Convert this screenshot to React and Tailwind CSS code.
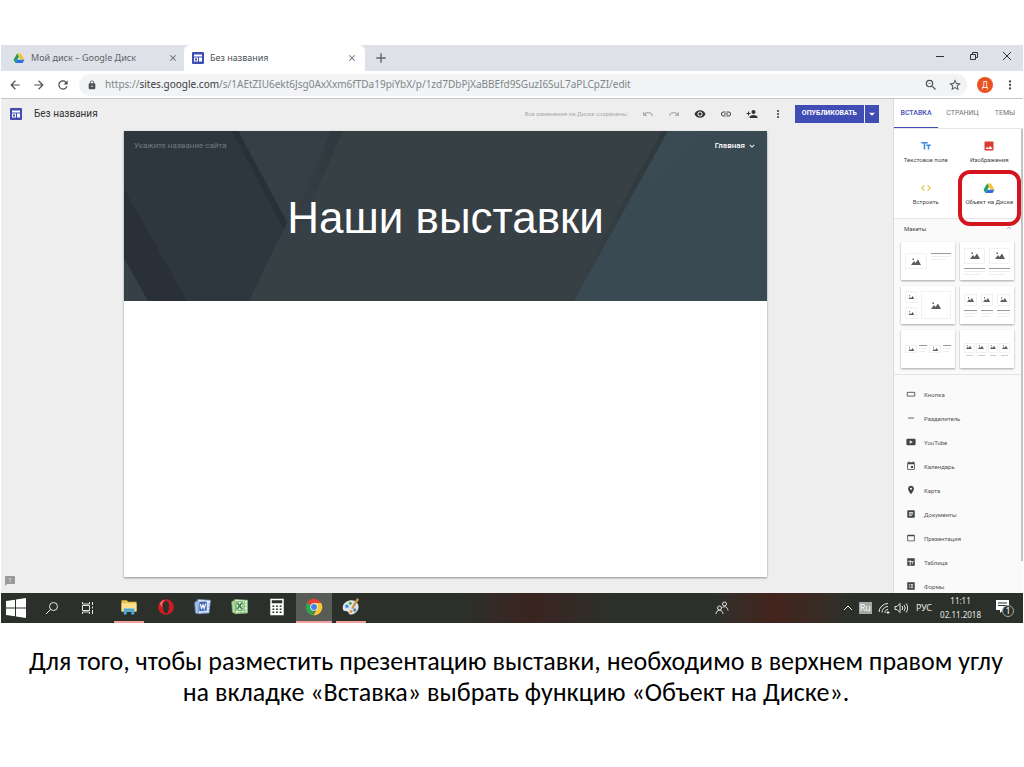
import React from "react";
import {
  MdArrowBack, MdArrowForward, MdRefresh, MdLock, MdStarBorder, MdMoreVert, MdUndo, MdRedo,
  MdVisibility, MdLink, MdPersonAdd, MdArrowDropDown, MdTextFields, MdImage, MdCode,
  MdRemove, MdEvent, MdPlace, MdArticle, MdWebAsset, MdFeedback, MdExpandMore,
  MdExpandLess, MdClose, MdAdd, MdZoomOut,
} from "react-icons/md";

const DriveLogo = ({ className }) => (
  <svg viewBox="0 0 24 22" className={className} aria-hidden="true">
    <path d="M8 1h8l8 14h-8z" fill="#fbc02d" />
    <path d="M8 1l4 7-8 14-4-7z" fill="#1e9e5a" />
    <path d="M8 15h16l-4 7H4z" fill="#2f6fe0" />
  </svg>
);

const SitesLogo = ({ className }) => (
  <svg viewBox="0 0 12 12" className={className} aria-hidden="true">
    <rect width="12" height="12" rx="1" fill="#3f4db3" />
    <path d="M2 2.500h8v2H2zM2 5.500h4v4H2zM7 5.500h3v4H7z" fill="#fff" />
    <path d="M3 6.500h2v2H3z" fill="#3f4db3" />
  </svg>
);

const ButtonIcon = ({ className }) => (
  <svg viewBox="0 0 24 24" fill="none" stroke="currentColor" strokeWidth="2" className={className} aria-hidden="true">
    <path d="M3 8h18v9H3z" />
  </svg>
);

const YouTubeIcon = ({ className }) => (
  <svg viewBox="0 0 24 24" fill="currentColor" className={className} aria-hidden="true">
    <path fillRule="evenodd" d="M3 4h18l2 2v12l-2 2H3l-2-2V6zM9 8v8l7-4z" />
  </svg>
);

const TableIcon = ({ className }) => (
  <svg viewBox="0 0 24 24" fill="currentColor" className={className} aria-hidden="true">
    <path fillRule="evenodd" d="M3 3h18v18H3zM9 7v3H5v2h4v7h2v-7h3v5h2v-5h3v-2h-8V7z" />
  </svg>
);

const FormsIcon = ({ className }) => (
  <svg viewBox="0 0 24 24" fill="currentColor" className={className} aria-hidden="true">
    <path fillRule="evenodd" d="M3 3h18v18H3zM7 7v2h2V7zM11 7v2h6V7zM7 11v2h2v-2zM11 11v2h6v-2zM7 15v2h2v-2zM11 15v2h6v-2z" />
  </svg>
);

function Browser() {
  return (
    <header className="font-['Noto_Sans','Open_Sans',sans-serif]">
      <div className="flex h-[26px] items-stretch bg-[#dee1e8] text-[#5f6368]">
        <div className="flex w-[183px] items-center pr-1 pl-3">
          <DriveLogo className="mr-1.5 h-2.5 w-3" />
          <span className="flex-1 text-[9px] whitespace-nowrap">Мой диск – Google Диск</span>
          <button aria-label="Закрыть вкладку" className="p-0.5"><MdClose className="size-2.5" /></button>
        </div>
        <div className="flex w-[181px] items-center rounded-t-md bg-white pr-1.5 pl-2">
          <SitesLogo className="mr-1.5 size-3" />
          <span className="flex-1 text-[9px] whitespace-nowrap text-[#4a4d52]">Без названия</span>
          <button aria-label="Закрыть вкладку" className="p-0.5"><MdClose className="size-2.5" /></button>
        </div>
        <button aria-label="Новая вкладка" className="px-2"><MdAdd className="size-4" /></button>
        <div className="ml-auto flex pb-1 text-[#333]">
          <button aria-label="Свернуть" className="flex w-[34px] items-center justify-center">
            <svg viewBox="0 0 10 10" className="size-2.5" stroke="currentColor"><path d="M1 5.500h8" /></svg>
          </button>
          <button aria-label="Развернуть" className="flex w-[34px] items-center justify-center">
            <svg viewBox="0 0 10 10" className="size-2.5" fill="none" stroke="currentColor"><path d="M1.500 3.500h5v5h-5zM3.500 3.500v-2h5v5h-2" /></svg>
          </button>
          <button aria-label="Закрыть" className="flex w-8 items-center justify-center">
            <svg viewBox="0 0 10 10" className="size-2.5" stroke="currentColor"><path d="M1 1l8 8M9 1l-8 8" /></svg>
          </button>
        </div>
      </div>
      <div className="flex h-7 items-center border-b border-[#c4c6c9] bg-white pr-1.5 pl-0.5 text-[#4d5156]">
        <button aria-label="Назад" className="flex w-6 justify-center"><MdArrowBack className="size-3.5" /></button>
        <button aria-label="Вперёд" className="flex w-6 justify-center"><MdArrowForward className="size-3.5" /></button>
        <button aria-label="Обновить" className="flex w-6 justify-center"><MdRefresh className="size-3.5" /></button>
        <div className="ml-1 flex h-[22px] flex-1 items-center rounded-full bg-[#f1f3f4] pl-2">
          <MdLock className="mr-2 size-2.5" />
          <div role="textbox" aria-label="Адрес" className="flex-1 text-[10px] whitespace-nowrap text-[#80868b]">
            https://<span className="text-[#3c4043]">sites.google.com</span>/s/1AEtZIU6ekt6Jsg0AxXxm6fTDa19piYbX/p/1zd7DbPjXaBBEfd9SGuzI6SuL7aPLCpZI/edit
          </div>
          <button aria-label="Масштаб" className="flex w-6 justify-center"><MdZoomOut className="size-3.5" /></button>
          <button aria-label="В закладки" className="flex w-6 justify-center"><MdStarBorder className="size-3.5" /></button>
        </div>
        <button className="mx-2.5 size-4 rounded-full bg-[#ea5320] text-[8px] leading-4 text-white">Д</button>
        <button aria-label="Меню"><MdMoreVert className="size-3.5" /></button>
      </div>
    </header>
  );
}

const toolbarActions = [
  ["Отменить", MdUndo, "text-[#b0b0b0]"],
  ["Повторить", MdRedo, "text-[#b0b0b0]"],
  ["Просмотр", MdVisibility, "text-[#333]"],
  ["Ссылка", MdLink, "text-[#444]"],
  ["Добавить редакторов", MdPersonAdd, "text-[#333]"],
  ["Ещё", MdMoreVert, "text-[#444]"],
];

function Toolbar() {
  return (
    <div className="flex h-8 items-center pr-3.5 pb-[3px] pl-[9px]">
      <SitesLogo className="mr-3 size-3" />
      <h1 className="text-[10px] text-[#333]">Без названия</h1>
      <span className="ml-auto text-[6px] whitespace-nowrap text-[#aaa]">Все изменения на Диске сохранены</span>
      <div className="ml-2 flex">
        {toolbarActions.map(([label, Icon, tone]) => (
          <button key={label} aria-label={label} className={`flex w-[26px] justify-center ${tone}`}>
            <Icon className="size-3" />
          </button>
        ))}
      </div>
      <div className="ml-1 flex h-[18px] gap-px text-white">
        <button className="bg-[#3f4db5] px-[7px] text-[7px] font-bold">ОПУБЛИКОВАТЬ</button>
        <button aria-label="Параметры публикации" className="w-3.5 bg-[#3f4db5]"><MdArrowDropDown className="size-3.5" /></button>
      </div>
    </div>
  );
}

function Banner() {
  return (
    <section className="relative h-[170px] shrink-0 bg-[#374045] text-white">
      <svg viewBox="0 0 643 170" preserveAspectRatio="none" className="absolute inset-0 size-full" aria-hidden="true">
        <defs>
          <linearGradient id="edge" x1="0" x2="1">
            <stop offset="0" stopColor="#2f383d" stopOpacity="0" />
            <stop offset="1" stopColor="#2f383d" />
          </linearGradient>
          <linearGradient id="teal" x1="0" x2="1" y1="0" y2="1">
            <stop offset="0" stopColor="#3a4b54" />
            <stop offset="1" stopColor="#394951" />
          </linearGradient>
        </defs>
        <path d="M114 0H219L163 130z" fill="#353f45" />
        <path d="M207 0h12L174 100l-8-8z" fill="url(#edge)" />
        <path d="M0 0H114L163 91 125 170H0z" fill="#2e373e" />
        <path d="M108 0H114L163 91l-3 8z" fill="#293137" />
        <path d="M0 58L63 170H24L0 127z" fill="#2a3037" />
        <path d="M0 127L24 170H0z" fill="#354047" />
        <path d="M538 0h6L450 170h-6z" fill="url(#edge)" />
        <path d="M544 0h99v170H450z" fill="url(#teal)" />
      </svg>
      <div className="relative flex items-center justify-between px-2.5 pt-[9px]">
        <span className="text-[8px] text-[#717a7f]">Укажите название сайта</span>
        <button className="flex items-center gap-0.5 text-[8px] font-medium">Главная <MdExpandMore className="size-2.5" /></button>
      </div>
      <h2 className="relative mt-9 text-center font-['Liberation_Sans',Arial,sans-serif] text-[44px] leading-[60px]">Наши выставки</h2>
    </section>
  );
}

const Pic = ({ className }) => (
  <span className={`flex items-center justify-center border border-[#f1f1f1] text-[#5c5c5c] ${className}`}>
    <svg viewBox="0 0 20 14" className="w-2/3 max-w-2.5" fill="currentColor" aria-hidden="true">
      <path d="M0 14L6 6l3 4 5-7 6 11zM3 1h3v3H3z" />
    </svg>
  </span>
);

const Lines = ({ className = "" }) => (
  <span className={`flex flex-col gap-0.5 ${className}`}>
    <i className="h-px bg-[#999]" />
    <i className="h-px bg-[#eee]" />
    <i className="h-px w-3/4 bg-[#eee]" />
  </span>
);

const Captioned = ({ pic }) => (
  <span className="flex flex-1 flex-col gap-1">
    <Pic className={pic} />
    <Lines />
  </span>
);

const layouts = [
  <span className="flex w-full gap-1"><Pic className="h-4 w-[22px]" /><Lines className="w-5" /></span>,
  <span className="flex w-full gap-1"><Captioned pic="h-4" /><Captioned pic="h-4" /></span>,
  <span className="flex w-full gap-1">
    <span className="flex flex-col gap-1"><Pic className="h-3 w-3" /><Pic className="h-3 w-3" /></span>
    <Pic className="h-7 flex-1" />
  </span>,
  <span className="flex w-full gap-1"><Captioned pic="h-3" /><Captioned pic="h-3" /><Captioned pic="h-3" /></span>,
  <span className="flex w-full gap-0.5">
    <Pic className="h-2 w-3" /><Lines className="flex-1" /><Pic className="h-2 w-3" /><Lines className="flex-1" />
  </span>,
  <span className="flex w-full gap-px">
    {[0, 1, 2, 3].map((n) => (
      <span key={n} className="flex flex-1 flex-col gap-0.5"><Pic className="h-2.5" /><i className="mx-0.5 h-px bg-[#ccc]" /></span>
    ))}
  </span>,
];
const layoutNames = ["Картинка и текст", "Две колонки", "Коллаж", "Три колонки", "Две карточки", "Четыре колонки"];

const inserts = [
  ["Текстовое поле", MdTextFields, "text-[#3b8de0]"],
  ["Изображения", MdImage, "text-[#d83b30]"],
  ["Встроить", MdCode, "text-[#e0bb2a]"],
  ["Объект на Диске", DriveLogo, ""],
];

const components = [
  ["Кнопка", ButtonIcon],
  ["Разделитель", MdRemove],
  ["YouTube", YouTubeIcon],
  ["Календарь", MdEvent],
  ["Карта", MdPlace],
  ["Документы", MdArticle],
  ["Презентация", MdWebAsset],
  ["Таблица", TableIcon],
  ["Формы", FormsIcon],
];

function SidePanel() {
  return (
    <aside className="flex w-[130px] shrink-0 flex-col border-l border-[#dcdcdc] bg-[#fafafa]">
      <nav className="flex h-[29px] shrink-0 bg-white text-[7px] text-[#757575]">
        <button className="w-11 border-b border-[#3f4db5] font-medium text-[#3f4db5]">ВСТАВКА</button>
        <button className="flex-1">СТРАНИЦ</button>
        <button className="w-9">ТЕМЫ</button>
      </nav>
      <div className="min-h-0 flex-1 border-t border-[#e6e6e6]">
        <div className="flex h-full">
          <div className="min-w-0 flex-1 overflow-hidden">
            <div className="grid grid-cols-2 border-b border-[#e6e6e6] bg-white pt-[3px] pb-0.5">
              {inserts.map(([label, Icon, tone]) => (
                <button key={label} className="relative flex h-[42px] flex-col items-center gap-1 pt-2 text-[6px] whitespace-nowrap text-[#444]">
                  <span className="flex h-3 items-center"><Icon className={label === "Объект на Диске" ? "h-2.5 w-3" : `size-3 ${tone}`} /></span>
                  <span className="leading-2">{label}</span>
                  {label === "Объект на Диске" && (
                    <span className="absolute inset-x-0 -top-1 -bottom-2.5 z-10 rounded-xl border-4 border-[#d4141f]" />
                  )}
                </button>
              ))}
            </div>
            <button className="mb-[5px] flex h-[18px] w-full items-center justify-between pr-2 pl-2.5 text-[6px] text-[#444]">
              Макеты <MdExpandLess className="size-2 text-[#999]" />
            </button>
            <div className="grid grid-cols-2 gap-x-[5px] gap-y-1.5 border-b border-[#e4e4e4] px-[7px] pb-1.5">
              {layouts.map((preview, i) => (
                <button key={layoutNames[i]} aria-label={layoutNames[i]} className="flex h-[38px] items-center bg-white px-1 shadow-[0_1px_2px_rgba(0,0,0,0.35)]">
                  {preview}
                </button>
              ))}
            </div>
            <ul className="pt-[7px]">
              {components.map(([label, Icon]) => (
                <li key={label}>
                  <button className="flex h-6 w-full items-center gap-2 pl-3 text-[6px] text-[#555]">
                    <Icon className="size-2.5 text-[#444]" /> {label}
                  </button>
                </li>
              ))}
            </ul>
          </div>
          <div className="h-[93%] w-0.5 bg-[#c4c4c4]" />
        </div>
      </div>
    </aside>
  );
}

const taskApps = [
  ["Проводник", "line", (
    <g>
      <path d="M2 3h7l2 2h11v13H2z" fill="#e9c04e" />
      <path d="M2 7h20v11H2z" fill="#fae08a" />
      <path d="M5 22v-8h14v8h-4v-4H9v4z" fill="#49a9df" />
    </g>
  )],
  ["Opera", "", (
    <g>
      <ellipse cx="12" cy="12" rx="10.500" ry="10.500" fill="#cf1b22" />
      <ellipse cx="12" cy="12" rx="4" ry="8.500" fill="#2b312b" />
      <path d="M4 7a10 10 0 0 1 7-5C7 5 6 9 6 13z" fill="#f0797a" />
    </g>
  )],
  ["Word", "", (
    <g>
      <path d="M5 2l17 1-2 17-14 1z" fill="#e8f0fb" stroke="#6f93d2" />
      <path d="M18 8h3M18 12h3M17 16h3M9 19h9" stroke="#7fa1da" />
      <path d="M1 6l4-3 1 18-4-1z" fill="#a8c2ea" stroke="#6f93d2" />
      <path d="M7 5l10-.500v12L7 17.500z" fill="#3c67b5" />
      <path d="M8.500 8l1.500 6 2-5 1.500 5L15.500 7.500" fill="none" stroke="#fff" strokeWidth="1.500" />
    </g>
  )],
  ["Excel", "", (
    <g>
      <path d="M5 2l17 1v17l-16 1z" fill="#e3f3dd" stroke="#7dbb70" />
      <path d="M17 7h5M17 11h5M9 16h13M9 19h12M18 4v16M13 15v5" stroke="#7dbb70" />
      <path d="M1 5l4-2 1 18-4-2z" fill="#b5dbab" stroke="#7dbb70" />
      <path d="M7 5h9v11H7z" fill="#e3f3dd" stroke="#3c8e43" />
      <path d="M8.500 6.500l6 8M14.500 6.500l-6 8" fill="none" stroke="#2c7a36" strokeWidth="2" />
    </g>
  )],
  ["Калькулятор", "", (
    <g>
      <path d="M3 1h18v22H3z" fill="#fff" />
      <path d="M5 3h14v4H5z" fill="#2b312b" />
      <path d="M6 11h12M6 15h12M6 19h12" stroke="#2b312b" strokeWidth="2" strokeDasharray="2.400 2.400" />
    </g>
  )],
  ["Chrome", "active", (
    <g>
      <path d="M12 12L2.500 6.500A11 11 0 0 1 21.500 6.500H12z" fill="#e64235" />
      <path d="M12 12L11 23A11 11 0 0 1 2.500 6.500z" fill="#31a452" />
      <path d="M12 6.500h9.500A11 11 0 0 1 11 23l6-10z" fill="#fbc92f" />
      <circle cx="12" cy="12" r="5" fill="#fff" />
      <circle cx="12" cy="12" r="4" fill="#4382ec" />
    </g>
  )],
  ["Paint", "line", (
    <g>
      <path d="M11 3c7-1 12 4 11 10-1 6-6 9-10 9-4 0-2-3-5-4s-6 0-6-5 4-9 10-10z" fill="#dce4ea" />
      <circle cx="6.500" cy="11" r="2.200" fill="#3d8bd0" />
      <circle cx="11" cy="7" r="2" fill="#4aa64c" />
      <circle cx="17" cy="16" r="2.200" fill="#5b7fb0" />
      <circle cx="12" cy="18" r="2" fill="#e7963a" />
      <path d="M20 0l3 2-8 12-2 1v-3z" fill="#c8924a" />
    </g>
  )],
];

function Taskbar() {
  return (
    <footer className="flex h-[30px] items-center bg-[#2b312a] bg-linear-to-r from-[#2b312a] from-45% via-[#3a2320] via-52% to-[#2b312a] to-60% font-['Noto_Sans','Open_Sans',sans-serif] text-[#e8e8e8]">
      <button aria-label="Пуск" className="flex w-[33px] justify-center pr-1">
        <svg viewBox="0 0 20 20" className="size-5" fill="#fff"><path d="M0 3l9-1.300V9.500H0zM10 1.500L20 0v9.500H10zM0 10.500h9v7.800L0 17zM10 10.500h10V20l-10-1.500z" /></svg>
      </button>
      <button aria-label="Поиск" className="flex w-9 justify-center">
        <svg viewBox="0 0 14 14" className="size-3.5" fill="none" stroke="currentColor"><circle cx="8.500" cy="5.500" r="4" /><path d="M5.500 8.500L1 13" /></svg>
      </button>
      <button aria-label="Представление задач" className="flex w-9 justify-center">
        <svg viewBox="0 0 14 14" className="size-3.5" fill="none" stroke="currentColor"><path d="M1.500 4.500h7v5h-7zM1.500 1v2h7V1M1.500 13v-2h7v2M11.500 1v3M11.500 9v4M11.500 5.500v2" /></svg>
      </button>
      <div className="ml-[5px] flex h-full gap-px">
        {taskApps.map(([label, state, art]) => (
          <button key={label} aria-label={label} className={state === "active" ? "flex w-9 flex-col bg-[#575c57]" : "flex w-9 flex-col px-[3px]"}>
            <span className="flex flex-1 items-center justify-center self-stretch">
              <svg viewBox="0 0 24 24" className="size-[18px]" aria-hidden="true">{art}</svg>
            </span>
            <span className={state ? "h-0.5 self-stretch bg-[#f0a09c]" : "h-0.5"} />
          </button>
        ))}
      </div>
      <div className="ml-auto flex h-full w-[311px] items-center bg-linear-to-r from-[#2b312a] via-[#44231d] via-20% to-[#2b312a] to-45%">
        <button aria-label="Люди" className="flex w-5 justify-center">
          <svg viewBox="0 0 14 14" className="size-3.5" fill="none" stroke="currentColor"><circle cx="4.500" cy="7" r="2" /><path d="M1 13c0-5 7-5 7 0" /><circle cx="9.500" cy="3" r="2" /><path d="M7.500 6.500c3-2 5 0 5.500 3" /></svg>
        </button>
        <div className="ml-auto flex items-center gap-1 pr-2 text-[9px]">
          <button aria-label="Скрытые значки">
            <svg viewBox="0 0 10 10" className="mr-0.5 size-2.5" fill="none" stroke="currentColor"><path d="M1 7l4-4 4 4" /></svg>
          </button>
          <span className="bg-[#a6aaa6] px-px text-[9px] leading-3 text-white">Ru</span>
          <svg viewBox="0 0 12 12" className="ml-0.5 size-3" fill="none" stroke="currentColor" aria-hidden="true"><path d="M1 10A9 9 0 0 1 10 1.500M4 10.500a6 6 0 0 1 6-6M7 11a3 3 0 0 1 3-3.500" /><path d="M9 10h2v1H9z" fill="currentColor" /></svg>
          <svg viewBox="0 0 14 12" className="h-3 w-3.5" fill="none" stroke="currentColor" aria-hidden="true"><path d="M1 4.500h2l3-3v9l-3-3H1zM8 4q1.500 2 0 4M10 3q2.500 3 0 6M12 1.500q3.500 4.500 0 9" /></svg>
          <span className="ml-1">РУС</span>
          <time className="ml-1 text-center text-[8px] leading-[14px]">11:11<br />02.11.2018</time>
          <button aria-label="Уведомления" className="ml-2.5">
            <svg viewBox="0 0 20 20" className="size-5">
              <path d="M1 2h13v10H8l-3 3v-3H1z" fill="#fff" />
              <path d="M3 5h9M3 7.500h9" stroke="#2b312b" />
              <circle cx="13" cy="13" r="5.500" fill="#2b312b" stroke="#aaa" />
              <text x="13" y="16" textAnchor="middle" fontSize="9" fill="#fff">1</text>
            </svg>
          </button>
        </div>
      </div>
    </footer>
  );
}

export default function App() {
  return (
    <div className="bg-white px-px pt-[45px] pb-8 font-[Roboto,'Noto_Sans',sans-serif]">
      <Browser />
      <main className="flex h-[494px] bg-[#eee]">
        <div className="flex min-w-0 flex-1 flex-col">
          <Toolbar />
          <div className="mr-[126px] ml-[123px] flex flex-1 flex-col bg-white shadow-[0_1px_2px_rgba(0,0,0,0.4)]">
            <Banner />
          </div>
          <button aria-label="Отправить отзыв" className="flex h-4 w-5 shrink-0 items-start pl-[3px] text-[#999]">
            <MdFeedback className="-mt-0.5 size-3" />
          </button>
        </div>
        <SidePanel />
      </main>
      <Taskbar />
      <p className="pt-[23px] pr-4 pl-6 text-center font-[Carlito,Lato,'Open_Sans',sans-serif] text-[26px] leading-[31px] text-black">
        Для того, чтобы разместить презентацию выставки, необходимо в верхнем правом углу на вкладке «Вставка» выбрать функцию «Объект на Диске».
      </p>
    </div>
  );
}
